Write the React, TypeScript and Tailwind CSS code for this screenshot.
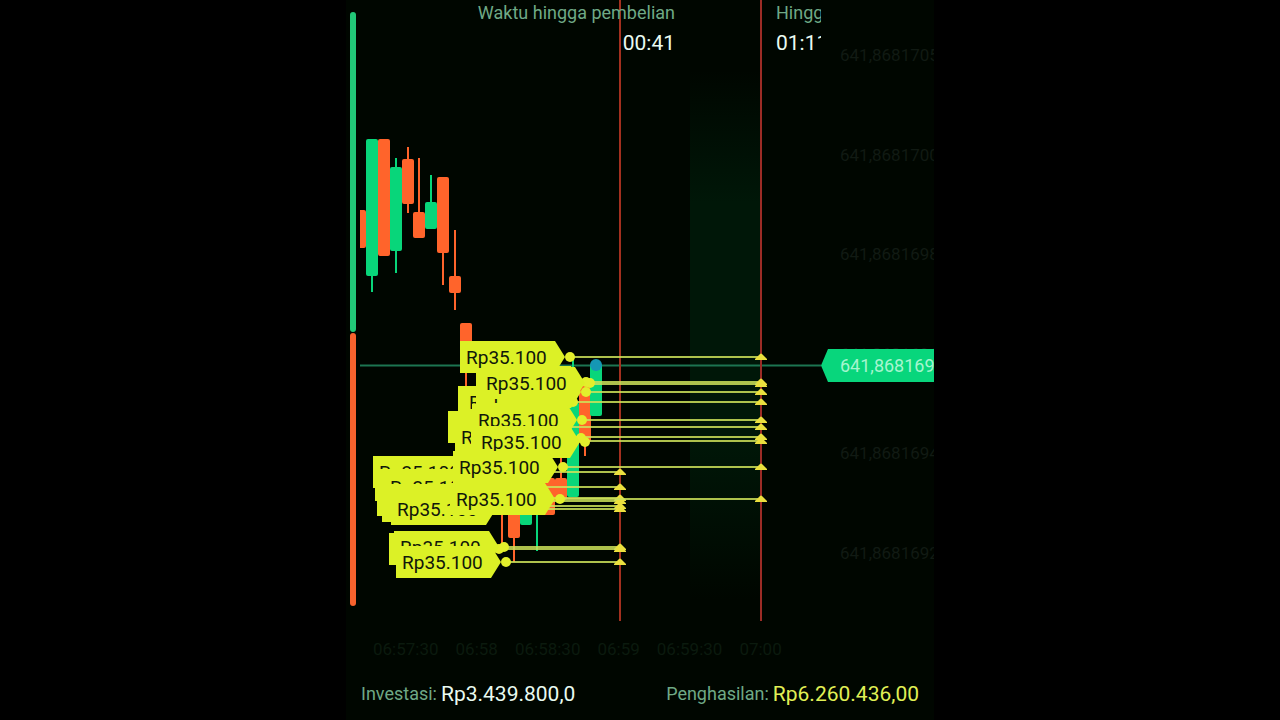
type Tone = 'up' | 'down';

type Candle = { x: number; tone: Tone; open: number; close: number; high?: number; low?: number };

// folded: the label lies fully under a later tag, only the shape shows
type Trade = { x: number; y: number; folded?: boolean };

const EXPIRY_NEAR = 620;
const EXPIRY_FAR = 761;

const toneFill: Record<Tone, string> = {
  up: 'fill-[#08d67a]',
  down: 'fill-[#ff642b]',
};

const candles: Candle[] = [
  { x: 360, tone: 'down', open: 210, close: 248 },
  { x: 372, tone: 'up', open: 139, close: 276, low: 292 },
  { x: 384, tone: 'down', open: 139, close: 256 },
  { x: 396, tone: 'up', open: 167, close: 251, high: 158, low: 273 },
  { x: 408, tone: 'down', open: 159, close: 204, high: 147, low: 213 },
  { x: 419, tone: 'down', open: 212, close: 238, high: 158 },
  { x: 431, tone: 'up', open: 202, close: 229, high: 175 },
  { x: 443, tone: 'down', open: 177, close: 253, low: 285 },
  { x: 455, tone: 'down', open: 276, close: 293, high: 230, low: 310 },
  { x: 466, tone: 'down', open: 323, close: 350, low: 410 },
  { x: 502, tone: 'down', open: 490, close: 512, low: 550 },
  { x: 514, tone: 'down', open: 500, close: 538, low: 562 },
  { x: 526, tone: 'up', open: 500, close: 525 },
  { x: 537, tone: 'up', open: 490, close: 510, low: 551 },
  { x: 549, tone: 'down', open: 478, close: 515 },
  { x: 561, tone: 'down', open: 478, close: 500, high: 450 },
  { x: 573, tone: 'up', open: 402, close: 497, high: 357 },
  { x: 585, tone: 'down', open: 386, close: 442, low: 456 },
  { x: 596, tone: 'up', open: 364, close: 416 },
];

// Painted in this order, so the last ones lie on top
const farTrades: Trade[] = [
  { x: 568, y: 402, folded: true },
  { x: 573, y: 402 },
  { x: 558, y: 427, folded: true },
  { x: 565, y: 437 },
  { x: 581, y: 438, folded: true },
  { x: 586, y: 392 },
  { x: 586, y: 382, folded: true },
  { x: 582, y: 420 },
  { x: 590, y: 383 },
  { x: 570, y: 357 },
  { x: 585, y: 442 },
];

const nearTrades: Trade[] = [
  { x: 483, y: 472 },
  { x: 485, y: 485, folded: true },
  { x: 494, y: 487 },
  { x: 487, y: 500, folded: true },
  { x: 492, y: 506, folded: true },
  { x: 501, y: 509 },
  { x: 499, y: 549, folded: true },
  { x: 504, y: 547 },
  { x: 506, y: 562 },
];

const lateTrades: Trade[] = [
  { x: 563, y: 467 },
  { x: 560, y: 499 },
];

const nearLines = [472, 487, 498, 501, 506, 509, 547, 549, 562];
const farLines = [357, 382, 384, 392, 402, 420, 427, 437, 441, 467, 499];

const prices = ['641,8681705', '641,8681700', '641,8681698', '641,8681696', '641,8681694', '641,8681692'];
const times = ['06:57:30', '06:58', '06:58:30', '06:59', '06:59:30', '07:00'];

const startOf = (y: number, trades: Trade[]) =>
  Math.min(...trades.filter((t) => Math.abs(t.y - y) < 4).map((t) => t.x));

function CandleShape({ x, tone, open, close, high = open, low = close }: Candle) {
  return (
    <g className={toneFill[tone]}>
      <rect x={x - 1} y={high} width={2} height={low - high} />
      <rect x={x - 6} y={open} width={12} height={close - open} rx={2} />
    </g>
  );
}

function TradeLine({ y, from, to }: { y: number; from: number; to: number }) {
  return (
    <g>
      <line x1={from} x2={to} y1={y} y2={y} className="stroke-[#cde25a]" strokeWidth={2} opacity={0.85} />
      <path d={`M${to - 6} ${y + 3} v-1 l4 -4 q2 -3 4 0 l4 4 v1z`} className="fill-[#eadf3e]" />
    </g>
  );
}

function TradeTag({ x, y, folded }: Trade) {
  return (
    <g>
      <path d={`M${x - 110} ${y - 16} h95 l10 16 l-10 16 h-95z`} className="fill-[#dcf126]" />
      <circle cx={x} cy={y} r={5} className="fill-[#e3ef2c]" />
      {!folded && (
        <text x={x - 104} y={y + 7} className="fill-[#11170a] text-[19px]">
          Rp35.100
        </text>
      )}
    </g>
  );
}

function Chart() {
  return (
    <svg viewBox="360 0 461 621" className="block w-full" role="img" aria-label="Grafik harga">
      <defs>
        <linearGradient id="zone" x1="0" y1="0" x2="0" y2="1">
          <stop offset="0" stopColor="#001708" stopOpacity="0" />
          <stop offset="0.25" stopColor="#001708" />
          <stop offset="0.7" stopColor="#001708" />
          <stop offset="1" stopColor="#001708" stopOpacity="0" />
        </linearGradient>
      </defs>

      <rect x={690} y={70} width={70} height={530} fill="url(#zone)" />

      <line x1={360} x2={821} y1={365.5} y2={365.5} className="stroke-[#1c7551]" strokeWidth={2} />
      {candles.map((c) => (
        <CandleShape key={c.x} {...c} />
      ))}
      <circle cx={596} cy={365} r={6} className="fill-[#1597b4]" />

      <line x1={EXPIRY_NEAR} x2={EXPIRY_NEAR} y1={0} y2={621} className="stroke-[#a3301f]" strokeWidth={2} />
      <line x1={EXPIRY_FAR} x2={EXPIRY_FAR} y1={0} y2={621} className="stroke-[#9c2c26]" strokeWidth={2} />

      {nearLines.map((y) => (
        <TradeLine key={y} y={y} from={startOf(y, nearTrades)} to={EXPIRY_NEAR} />
      ))}
      {farLines.map((y) => (
        <TradeLine key={y} y={y} from={startOf(y, [...farTrades, ...lateTrades])} to={EXPIRY_FAR} />
      ))}

      {[...farTrades, ...nearTrades, ...lateTrades].map((t) => (
        <TradeTag key={`${t.x}-${t.y}`} {...t} />
      ))}
    </svg>
  );
}

function Countdown({ label, time }: { label: string; time: string }) {
  return (
    <div className="whitespace-nowrap">
      <p className="text-lg leading-[26px] text-[#6fa986]">{label}</p>
      <p className="text-[21px] leading-[34px] text-[#e9fbf1]">{time}</p>
    </div>
  );
}

function SentimentBar() {
  return (
    <div className="flex w-[14px] shrink-0 flex-col gap-px px-1 pt-3 pb-[15px]">
      <div className="w-[6px] rounded-sm bg-[#22c878]" style={{ flexGrow: 320 }} />
      <div className="w-[6px] rounded-sm bg-[#f7622d]" style={{ flexGrow: 273 }} />
    </div>
  );
}

function PriceAxis() {
  return (
    <div className="relative w-[113px] shrink-0 overflow-hidden">
      <ul className="flex h-full flex-col justify-between pt-[45px] pb-[58px] pl-[19px] text-[17px] leading-5 text-[#111a13]">
        {prices.map((price) => (
          <li key={price}>{price}</li>
        ))}
      </ul>
      <div className="absolute inset-x-0 top-[349px] flex h-[33px] items-center bg-[#08d67c] pl-[19px] text-lg text-[#a5f5cf] [clip-path:polygon(0_50%,7px_0,100%_0,100%_100%,7px_100%)]">
        641,8681695
      </div>
    </div>
  );
}

export default function App() {
  return (
    <main className="flex min-h-screen justify-center bg-black font-[Roboto,'Noto_Sans',sans-serif]">
      <section className="flex w-full max-w-[588px] flex-col overflow-hidden bg-[#000600]">
        <div className="flex">
          <SentimentBar />
          <div className="relative min-w-0 flex-1 overflow-hidden">
            <Chart />
            <div className="absolute inset-x-0 top-0 flex">
              <div className="flex w-[315px] shrink-0 justify-end text-right">
                <Countdown label="Waktu hingga pembelian" time="00:41" />
              </div>
              <div className="ml-[101px]">
                <Countdown label="Hingg" time="01:11" />
              </div>
            </div>
          </div>
          <PriceAxis />
        </div>

        <div className="mt-[18px] flex gap-[17px] pl-[27px] text-[17px] leading-5 text-[#0b1a0e]">
          {times.map((time) => (
            <span key={time}>{time}</span>
          ))}
        </div>

        <dl className="mt-[22px] flex justify-between px-[15px] whitespace-nowrap">
          <div className="flex items-center gap-1">
            <dt className="text-lg leading-[26px] text-[#6fa986]">Investasi:</dt>
            <dd className="text-[21px] leading-[26px] text-[#e9fbf1]">Rp3.439.800,0</dd>
          </div>
          <div className="flex items-center gap-1">
            <dt className="text-lg leading-[26px] text-[#6fa986]">Penghasilan:</dt>
            <dd className="text-[21px] leading-[26px] text-[#e0f055]">Rp6.260.436,00</dd>
          </div>
        </dl>
      </section>
    </main>
  );
}
